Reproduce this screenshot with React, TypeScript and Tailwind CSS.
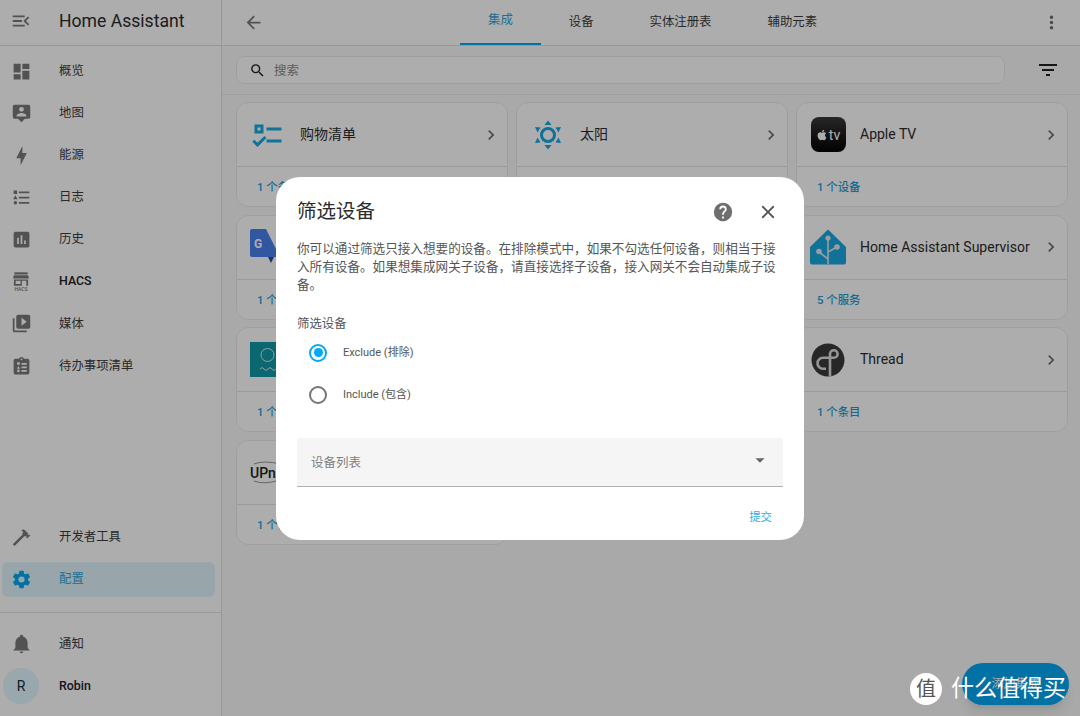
import { FaApple } from 'react-icons/fa'

const paths = {
  menuOpen: 'M21,15.61L19.59,17L14.58,12L19.59,7L21,8.39L17.44,12L21,15.61M3,6H16V8H3V6M3,13V11H13V13H3M3,18V16H16V18H3Z',
  dashboard: 'M13,3V9H21V3M13,21H21V11H13M3,21H11V15H3M3,13H11V3H3V13Z',
  map: 'M4,2H20A2,2 0 0,1 22,4V16A2,2 0 0,1 20,18H16L12,22L8,18H4A2,2 0 0,1 2,16V4A2,2 0 0,1 4,2M12,4.5A2.75,2.75 0 0,0 9.25,7.25A2.75,2.75 0 0,0 12,10A2.75,2.75 0 0,0 14.75,7.25A2.75,2.75 0 0,0 12,4.5M6.5,15.5H17.5V14.5C17.5,12.7 14,11.5 12,11.5C10,11.5 6.5,12.7 6.5,14.5V15.5Z',
  bolt: 'M11 15H6L13 1V9H18L11 23V15Z',
  logbook: 'M5,9.5L7.5,14H2.5L5,9.5M3,4H7V8H3V4M5,20A2,2 0 0,0 7,18A2,2 0 0,0 5,16A2,2 0 0,0 3,18A2,2 0 0,0 5,20M9,5V7H21V5H9M9,19H21V17H9V19M9,13H21V11H9V13Z',
  chart: 'M19 3H5C3.9 3 3 3.9 3 5V19C3 20.1 3.9 21 5 21H19C20.1 21 21 20.1 21 19V5C21 3.9 20.1 3 19 3M9 17H7V10H9V17M13 17H11V7H13V17M17 17H15V13H17V17Z',
  media: 'M4,6H2V20A2,2 0 0,0 4,22H18V20H4M20,2H8A2,2 0 0,0 6,4V16A2,2 0 0,0 8,18H20A2,2 0 0,0 22,16V4A2,2 0 0,0 20,2M12,14.5V5.5L18,10L12,14.5Z',
  todo: 'M19,3H14.82C14.4,1.84 13.3,1 12,1C10.7,1 9.6,1.84 9.18,3H5A2,2 0 0,0 3,5V19A2,2 0 0,0 5,21H19A2,2 0 0,0 21,19V5A2,2 0 0,0 19,3M12,2.8A1,1 0 0,1 13,3.8A1,1 0 0,1 12,4.8A1,1 0 0,1 11,3.8A1,1 0 0,1 12,2.8M7,7H10V10H7V7M12,8H18V10H12V8M12,12H18V14H12V12M12,16H18V18H12V16M8.5,11.5L10.3,14.5H6.7L8.5,11.5M8.5,15.5A1.5,1.5 0 0,1 10,17A1.5,1.5 0 0,1 8.5,18.5A1.5,1.5 0 0,1 7,17A1.5,1.5 0 0,1 8.5,15.5Z',
  hammer: 'M2 19.63L13.43 8.2L12.72 7.5L14.14 6.07L12 3.89C13.2 2.7 15.09 2.7 16.27 3.89L19.87 7.5L18.45 8.91H21.29L22 9.62L18.45 13.21L17.74 12.5V9.62L16.27 11.04L15.56 10.33L4.13 21.76L2 19.63Z',
  cog: 'M12,15.5A3.5,3.5 0 0,1 8.5,12A3.5,3.5 0 0,1 12,8.5A3.5,3.5 0 0,1 15.5,12A3.5,3.5 0 0,1 12,15.5M19.43,12.97C19.47,12.65 19.5,12.33 19.5,12C19.5,11.67 19.47,11.34 19.43,11L21.54,9.37C21.73,9.22 21.78,8.95 21.66,8.73L19.66,5.27C19.54,5.05 19.27,4.96 19.05,5.05L16.56,6.05C16.04,5.66 15.5,5.32 14.87,5.07L14.5,2.42C14.46,2.18 14.25,2 14,2H10C9.75,2 9.54,2.18 9.5,2.42L9.13,5.07C8.5,5.32 7.96,5.66 7.44,6.05L4.95,5.05C4.73,4.96 4.46,5.05 4.34,5.27L2.34,8.73C2.21,8.95 2.27,9.22 2.46,9.37L4.57,11C4.53,11.34 4.5,11.67 4.5,12C4.5,12.33 4.53,12.65 4.57,12.97L2.46,14.63C2.27,14.78 2.21,15.05 2.34,15.27L4.34,18.73C4.46,18.95 4.73,19.03 4.95,18.95L7.44,17.94C7.96,18.34 8.5,18.68 9.13,18.93L9.5,21.58C9.54,21.82 9.75,22 10,22H14C14.25,22 14.46,21.82 14.5,21.58L14.87,18.93C15.5,18.67 16.04,18.34 16.56,17.94L19.05,18.95C19.27,19.03 19.54,18.95 19.66,18.73L21.66,15.27C21.78,15.05 21.73,14.78 21.54,14.63L19.43,12.97Z',
  bell: 'M21,19V20H3V19L5,17V11C5,7.9 7.03,5.17 10,4.29C10,4.19 10,4.1 10,4A2,2 0 0,1 12,2A2,2 0 0,1 14,4C14,4.1 14,4.19 14,4.29C16.97,5.17 19,7.9 19,11V17L21,19M14,21A2,2 0 0,1 12,23A2,2 0 0,1 10,21',
  back: 'M20,11V13H8L13.5,18.5L12.08,19.92L4.16,12L12.08,4.08L13.5,5.5L8,11H20Z',
  dots: 'M12,16A2,2 0 0,1 14,18A2,2 0 0,1 12,20A2,2 0 0,1 10,18A2,2 0 0,1 12,16M12,10A2,2 0 0,1 14,12A2,2 0 0,1 12,14A2,2 0 0,1 10,12A2,2 0 0,1 12,10M12,4A2,2 0 0,1 14,6A2,2 0 0,1 12,8A2,2 0 0,1 10,6A2,2 0 0,1 12,4Z',
  search: 'M9.5,3A6.5,6.5 0 0,1 16,9.5C16,11.11 15.41,12.59 14.44,13.73L14.71,14H15.5L20.5,19L19,20.5L14,15.5V14.71L13.73,14.44C12.59,15.41 11.11,16 9.5,16A6.5,6.5 0 0,1 3,9.5A6.5,6.5 0 0,1 9.5,3M9.5,5C7,5 5,7 5,9.5C5,12 7,14 9.5,14C12,14 14,12 14,9.5C14,7 12,5 9.5,5Z',
  filter: 'M6,13H18V11H6M3,6V8H21V6M10,18H14V16H10V18Z',
  help: 'M15.07,11.25L14.17,12.17C13.45,12.89 13,13.5 13,15H11V14.5C11,13.39 11.45,12.39 12.17,11.67L13.41,10.41C13.78,10.05 14,9.55 14,9C14,7.89 13.1,7 12,7A2,2 0 0,0 10,9H8A4,4 0 0,1 12,5A4,4 0 0,1 16,9C16,9.88 15.64,10.67 15.07,11.25M13,19H11V17H13M12,2A10,10 0 0,0 2,12A10,10 0 0,0 12,22A10,10 0 0,0 22,12C22,6.47 17.5,2 12,2Z',
  close: 'M19,6.41L17.59,5L12,10.59L6.41,5L5,6.41L10.59,12L5,17.59L6.41,19L12,13.41L17.59,19L19,17.59L13.41,12L19,6.41Z',
  chevron: 'M8.59,16.58L13.17,12L8.59,7.41L10,6L16,12L10,18L8.59,16.58Z',
  caret: 'M7,10L12,15L17,10H7Z',
  checks: 'M3 5H9V11H3V5M5 7V9H7V7H5M11 7H21V9H11V7M11 15H21V17H11V15M5 20L1.5 16.5L2.91 15.09L5 17.17L9.59 12.59L11 14L5 20Z',
}

function Icon({ d, size = 21, className = '' }: { d: string; size?: number; className?: string }) {
  return (
    <svg viewBox="0 0 24 24" width={size} height={size} className={className} fill="currentColor" fillRule="evenodd">
      <path d={d} />
    </svg>
  )
}

function HacsIcon() {
  return (
    <div className="flex w-[18px] flex-col items-center">
      <svg viewBox="0 0 18 15" width={16} height={14} fill="currentColor">
        <rect x="1.5" y="0" width="15" height="2.4" />
        <path d="M1 3.2H17L18 7H0Z" />
        <path d="M1 8H17V15H15V9.5H10V15H1V8M3 9.5V13H8.5V9.5H3Z" fillRule="evenodd" />
      </svg>
      <span className="mt-[1px] text-[5px] leading-[5px] font-medium">HACS</span>
    </div>
  )
}

function NavRow({ label, d, active, latin, custom }: { label: string; d?: string; active?: boolean; latin?: boolean; custom?: boolean }) {
  return (
    <div className="flex h-[42.15px] items-center px-[2px]">
      <div className={`flex h-[35px] w-[213px] items-center rounded-md pl-[7px] ${active ? 'bg-[#03a9f4]/[0.12]' : ''}`}>
        <div className={`flex w-6 justify-center ${active ? 'text-[#03a9f4]' : 'text-[#7a7a7a]'}`}>
          {custom ? <HacsIcon /> : <Icon d={d!} />}
        </div>
        <span className={`ml-[26px] text-[12.4px] ${active ? 'text-[#2fa4dc]' : latin ? 'font-medium text-[#212121]' : 'text-[#3d3d3d]'}`}>
          {label}
        </span>
      </div>
    </div>
  )
}

function Sidebar() {
  return (
    <aside className="flex h-full w-[222px] shrink-0 flex-col border-r border-[#e0e0e0] bg-white">
      <div className="flex h-[46px] shrink-0 items-center border-b border-[#e0e0e0] pb-[3px] pl-[10px]">
        <Icon d={paths.menuOpen} size={22} className="text-[#7a7a7a]" />
        <span className="ml-[27px] text-[17.6px] text-[#2b2b2b]">Home Assistant</span>
      </div>
      <nav className="pt-[4px]">
        <NavRow label="概览" d={paths.dashboard} />
        <NavRow label="地图" d={paths.map} />
        <NavRow label="能源" d={paths.bolt} />
        <NavRow label="日志" d={paths.logbook} />
        <NavRow label="历史" d={paths.chart} />
        <NavRow label="HACS" custom latin />
        <NavRow label="媒体" d={paths.media} />
        <NavRow label="待办事项清单" d={paths.todo} />
      </nav>
      <div className="flex-1" />
      <NavRow label="开发者工具" d={paths.hammer} />
      <NavRow label="配置" d={paths.cog} active />
      <div className="mt-[11px] border-t border-[#e0e0e0] pt-[10px] pb-[9px]">
        <NavRow label="通知" d={paths.bell} />
        <div className="flex h-[42px] items-center pl-[3px]">
          <div className="flex h-9 w-9 items-center justify-center rounded-full bg-[#e0f8ff] text-[14px] text-[#1c2b33]">R</div>
          <span className="ml-[20px] text-[12.4px] font-medium text-[#212121]">Robin</span>
        </div>
      </div>
    </aside>
  )
}

function SunLogo() {
  return (
    <svg viewBox="0 0 30 30" width={30} height={30} fill="#18a8e2">
      <circle cx="15" cy="15" r="6.5" fill="none" stroke="#18a8e2" strokeWidth="3" />
      <path d="M15 0.5L18.5 5H11.5Z" />
      <path d="M15 29.5L18.5 25H11.5Z" />
      <path d="M2 7L7.5 7.5L4.5 12.5Z" />
      <path d="M28 7L22.5 7.5L25.5 12.5Z" />
      <path d="M2 23L7.5 22.5L4.5 17.5Z" />
      <path d="M28 23L22.5 22.5L25.5 17.5Z" />
    </svg>
  )
}

function AppleTvLogo() {
  return (
    <div className="flex h-[35px] w-[35px] items-center justify-center gap-[1px] rounded-lg bg-gradient-to-b from-[#3a3a3a] to-[#050505] text-white">
      <FaApple size={12} />
      <span className="text-[14px] leading-none">tv</span>
    </div>
  )
}

function SupervisorLogo() {
  return (
    <svg viewBox="0 0 36 36" width={36} height={36}>
      <path d="M18 0.5L36 18V33.5A2 2 0 0 1 34 35.5H2A2 2 0 0 1 0 33.5V18Z" fill="#18a8e2" />
      <g stroke="#e8e8e8" strokeWidth="1.6" fill="none">
        <path d="M18 35V8" />
        <path d="M18 30L9 23" />
        <path d="M18 23L27 18" />
      </g>
      <circle cx="18" cy="9" r="2.6" fill="#e8e8e8" />
      <circle cx="9" cy="22.5" r="2.8" fill="#e8e8e8" />
      <circle cx="27" cy="18" r="2.8" fill="#e8e8e8" />
    </svg>
  )
}

function ThreadLogo() {
  return (
    <svg viewBox="0 0 34 34" width={34} height={34}>
      <circle cx="17" cy="17" r="16.5" fill="#3a3a3a" />
      <path
        d="M19 33.5V11A3.8 3.8 0 1 1 22.8 14.8H12A5.5 5.5 0 0 0 6.5 20.3A5.5 5.5 0 0 0 12 25.8H15"
        stroke="#dcdcdc"
        strokeWidth="2.6"
        fill="none"
      />
    </svg>
  )
}

function GoogleLogo() {
  return (
    <div className="relative h-[36px] w-[36px]">
      <svg viewBox="0 0 36 36" width={36} height={36}>
        <path d="M18 28L21 34L24 28Z" fill="#2a4aa0" />
        <path d="M2 0H16L30 28H2A2 2 0 0 1 0 26V2A2 2 0 0 1 2 0Z" fill="#4a80ee" />
      </svg>
      <span className="absolute top-[6px] left-[4px] text-[12px] font-bold text-white">G</span>
    </div>
  )
}

function TealLogo() {
  return (
    <svg viewBox="0 0 36 35" width={36} height={35} className="shrink-0">
      <rect width="36" height="35" fill="#119aa5" />
      <circle cx="17.5" cy="13" r="6.5" fill="none" stroke="#d8e8e8" strokeWidth="1" />
      <path d="M10 27Q12 24 14 27T18 27T22 27T26 27" fill="none" stroke="#d8e8e8" strokeWidth="1" />
    </svg>
  )
}

function UpnpLogo() {
  return (
    <div className="relative w-[36px] text-[14px] leading-none font-medium whitespace-nowrap text-[#222]">
      UPnP
      <svg viewBox="0 0 36 24" width={36} height={24} className="absolute -top-[5px] left-0" fill="none" stroke="#666" strokeWidth="0.7">
        <path d="M4 3Q14 -1 30 3" />
        <path d="M4 20Q14 24 30 19" />
      </svg>
    </div>
  )
}

type CardData = { title?: string; logo?: React.ReactNode; foot: string }

const cards: CardData[] = [
  { title: '购物清单', logo: <Icon d={paths.checks} size={36} className="shrink-0 text-[#18a8e2]" />, foot: '1 个条目' },
  { title: '太阳', logo: <SunLogo />, foot: '1 个条目' },
  { title: 'Apple TV', logo: <AppleTvLogo />, foot: '1 个设备' },
  { logo: <GoogleLogo />, foot: '1 个实体' },
  { foot: '' },
  { title: 'Home Assistant Supervisor', logo: <SupervisorLogo />, foot: '5 个服务' },
  { logo: <TealLogo />, foot: '1 个条目' },
  { foot: '' },
  { title: 'Thread', logo: <ThreadLogo />, foot: '1 个条目' },
  { logo: <UpnpLogo />, foot: '1 个条目' },
]

function IntegrationCard({ card }: { card: CardData }) {
  return (
    <div className="flex h-[105px] flex-col rounded-xl border border-[#ebebeb] bg-white">
      <div className="flex h-[64px] shrink-0 items-center border-b border-[#e4e4e4] pr-[6px] pl-[13px]">
        <div className="flex w-[36px] items-center justify-center">{card.logo}</div>
        <span className="ml-[14px] flex-1 text-[14px] text-[#2b2b2b]">{card.title}</span>
        <Icon d={paths.chevron} size={20} className="text-[#6f6f6f]" />
      </div>
      <div className="flex flex-1 items-center pt-[2px] pl-[20px] text-[11.4px] font-medium text-[#1f9bd6]">{card.foot}</div>
    </div>
  )
}

function Main() {
  return (
    <main className="flex h-full min-w-0 flex-1 flex-col bg-[#fafafa]">
      <div className="flex h-[46px] shrink-0 items-center border-b border-[#e0e0e0] bg-white">
        <Icon d={paths.back} size={21} className="ml-[21px] text-[#7a7a7a]" />
        <div className="ml-[196px] flex h-full text-[12.4px] text-[#3d3d3d]">
          <div className="flex items-center border-b-2 border-[#03a9f4] px-7 pb-[3px] text-[#2fa4dc]">集成</div>
          <div className="flex items-center px-7">设备</div>
          <div className="flex items-center px-7">实体注册表</div>
          <div className="flex items-center px-7">辅助元素</div>
        </div>
        <Icon d={paths.dots} size={21} className="mr-[18px] ml-auto text-[#6f6f6f]" />
      </div>
      <div className="flex h-[49px] shrink-0 items-center border-b border-[#ebebeb] pl-[14px]">
        <div className="flex h-[28px] flex-1 items-center rounded-lg border border-[#ebebeb] bg-white pl-[12px]">
          <Icon d={paths.search} size={17} className="text-[#222]" />
          <span className="ml-[8px] pt-[2px] text-[12.5px] text-[#8a8a8a]">搜索</span>
        </div>
        <div className="w-[75px] pl-[31px]">
          <Icon d={paths.filter} size={24} className="text-[#222]" />
        </div>
      </div>
      <div className="grid grid-cols-[272px_272px_272px] gap-x-2 gap-y-[7.7px] pt-[7px] pl-[14px]">
        {cards.map((card, i) => (
          <IntegrationCard key={i} card={card} />
        ))}
      </div>
    </main>
  )
}

function Radio({ label, checked }: { label: string; checked?: boolean }) {
  return (
    <div className="flex h-[42px] items-center pl-[12px]">
      <div className={`flex h-[18px] w-[18px] items-center justify-center rounded-full border-2 ${checked ? 'border-[#03a9f4]' : 'border-[#757575]'}`}>
        {checked && <div className="h-[9px] w-[9px] rounded-full bg-[#03a9f4]" />}
      </div>
      <span className="ml-[16px] text-[11px] text-[#555]">{label}</span>
    </div>
  )
}

function FilterDialog() {
  return (
    <div className="mt-[1px] flex w-[528px] flex-col rounded-[24px] bg-white px-[21px] pt-[20px] pb-[14px]">
      <div className="flex h-[30px] items-center">
        <h2 className="text-[19.5px] font-normal text-[#2b2b2b]">筛选设备</h2>
        <Icon d={paths.help} size={22} className="ml-auto text-[#6f6f6f]" />
        <Icon d={paths.close} size={22} className="mr-[4px] ml-[23px] text-[#555]" />
      </div>
      <p className="mt-[13px] text-[12.6px] leading-[18px] text-[#555]">
        你可以通过筛选只接入想要的设备。在排除模式中，如果不勾选任何设备，则相当于接入所有设备。如果想集成网关子设备，请直接选择子设备，接入网关不会自动集成子设备。
      </p>
      <div className="mt-[22px] text-[12.4px] leading-[16px] text-[#555]">筛选设备</div>
      <div>
        <Radio label="Exclude (排除)" checked />
        <Radio label="Include (包含)" />
      </div>
      <div className="mt-[22px] flex h-[49px] items-center border-b border-[#b0b0b0] bg-[#f5f5f5] pr-[12px] pl-[14px]">
        <span className="pt-[2px] text-[12.5px] text-[#808080]">设备列表</span>
        <Icon d={paths.caret} size={22} className="mb-[3px] ml-auto text-[#666]" />
      </div>
      <div className="mt-[22px] pr-[11px] text-right text-[11.4px] text-[#35a9dc]">提交</div>
    </div>
  )
}

export default function App() {
  return (
    <div className="relative flex h-[716px] w-[1080px] overflow-hidden font-['Roboto','Noto_Sans_CJK_SC',sans-serif]">
      <Sidebar />
      <Main />

      {/* add-integration button, sits under the scrim */}
      <div className="absolute top-[663px] left-[962px] flex h-[42px] w-[107px] items-center justify-center rounded-[21px] bg-[#03a9f4] text-[12px] text-white shadow-lg">
        添加集成
      </div>

      <div className="absolute inset-0 flex items-center justify-center bg-black/[0.32]">
        <FilterDialog />
      </div>

      {/* site watermark */}
      <div className="absolute top-[673px] left-[910px] flex items-center">
        <div className="flex h-[32px] w-[32px] items-center justify-center rounded-full bg-white text-[20px] leading-none text-[#555]">值</div>
        <span className="ml-[9px] text-[23px] leading-[32px] whitespace-nowrap text-white">什么值得买</span>
      </div>
    </div>
  )
}
